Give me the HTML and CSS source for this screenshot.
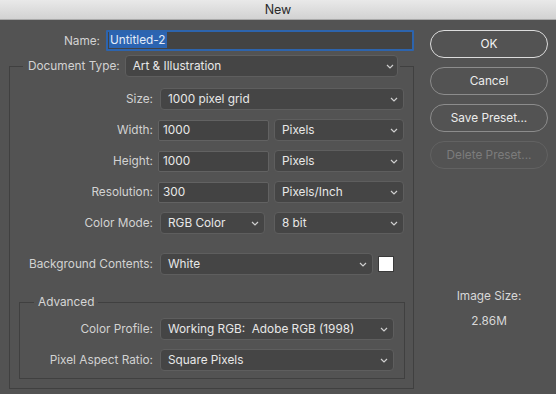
FILE: index.html
```html
<!DOCTYPE html>
<html lang="en">
  <head>
    <meta charset="UTF-8" />
    <meta name="viewport" content="width=device-width, initial-scale=1.0" />
    <title>New</title>
    <link rel="stylesheet" href="styles.css">
  </head>
  <body>
    <div class="titlebar">New</div>
    <div class="dialog">
      <div class="main">
        <div class="name-row">
          <label class="label name-label">Name:</label>
          <div class="field name-field"><span class="selected">Untitled-2</span></div>
        </div>

        <fieldset class="group doc-group">
          <legend class="doc-legend">
            <span class="label">Document Type:</span>
            <div class="select doc-select"><span>Art &amp; Illustration</span><svg class="chev" width="8" height="5" viewBox="0 0 8 5"><path d="M1 1L4 4L7 1" /></svg></div>
          </legend>

          <div class="row first">
            <span class="label">Size:</span>
            <div class="select inset size-select"><span>1000 pixel grid</span><svg class="chev" width="8" height="5" viewBox="0 0 8 5"><path d="M1 1L4 4L7 1" /></svg></div>
          </div>
          <div class="row">
            <span class="label">Width:</span>
            <div class="field num-field">1000</div>
            <div class="select unit-select"><span>Pixels</span><svg class="chev" width="8" height="5" viewBox="0 0 8 5"><path d="M1 1L4 4L7 1" /></svg></div>
          </div>
          <div class="row">
            <span class="label">Height:</span>
            <div class="field num-field">1000</div>
            <div class="select unit-select"><span>Pixels</span><svg class="chev" width="8" height="5" viewBox="0 0 8 5"><path d="M1 1L4 4L7 1" /></svg></div>
          </div>
          <div class="row">
            <span class="label">Resolution:</span>
            <div class="field num-field">300</div>
            <div class="select unit-select"><span>Pixels/Inch</span><svg class="chev" width="8" height="5" viewBox="0 0 8 5"><path d="M1 1L4 4L7 1" /></svg></div>
          </div>
          <div class="row">
            <span class="label">Color Mode:</span>
            <div class="select inset mode-select"><span>RGB Color</span><svg class="chev" width="8" height="5" viewBox="0 0 8 5"><path d="M1 1L4 4L7 1" /></svg></div>
            <div class="select unit-select"><span>8 bit</span><svg class="chev" width="8" height="5" viewBox="0 0 8 5"><path d="M1 1L4 4L7 1" /></svg></div>
          </div>
          <div class="row bg-row">
            <span class="label">Background Contents:</span>
            <div class="select inset bg-select"><span>White</span><svg class="chev" width="8" height="5" viewBox="0 0 8 5"><path d="M1 1L4 4L7 1" /></svg></div>
            <div class="swatch"></div>
          </div>

          <fieldset class="group adv-group">
            <legend class="adv-legend">Advanced</legend>
            <div class="row first">
              <span class="label adv-label">Color Profile:</span>
              <div class="select inset profile-select"><span>Working RGB:&nbsp; Adobe RGB (1998)</span><svg class="chev" width="8" height="5" viewBox="0 0 8 5"><path d="M1 1L4 4L7 1" /></svg></div>
            </div>
            <div class="row">
              <span class="label adv-label">Pixel Aspect Ratio:</span>
              <div class="select inset profile-select"><span>Square Pixels</span><svg class="chev" width="8" height="5" viewBox="0 0 8 5"><path d="M1 1L4 4L7 1" /></svg></div>
            </div>
          </fieldset>
        </fieldset>
      </div>

      <div class="side">
        <button class="btn primary">OK</button>
        <button class="btn">Cancel</button>
        <button class="btn">Save Preset...</button>
        <button class="btn" disabled>Delete Preset...</button>
        <div class="info">
          <div>Image Size:</div>
          <div class="info-value">2.86M</div>
        </div>
      </div>
    </div>
  </body>
</html>
```

FILE: styles.css
```css
* {
  box-sizing: border-box;
}
body {
  margin: 0;
  height: 394px;
  overflow: hidden;
  background: #535353;
  font-family: Inter, "Liberation Sans", Arial, sans-serif;
  font-size: 11.8px;
  color: #e6e6e6;
}
.titlebar {
  height: 20px;
  line-height: 20px;
  text-align: center;
  font-size: 12.5px;
  color: #2a2a2a;
  background: linear-gradient(#e9e9e9, #d2d2d2);
  border-bottom: 1px solid #a9a9a9;
}
.dialog {
  display: flex;
  padding-top: 10px;
}
.main {
  width: 414px;
}
.label {
  color: #d2d2d2;
  white-space: nowrap;
}

/* name */
.name-row {
  display: flex;
  align-items: center;
  gap: 6px;
  height: 21px;
}
.name-label {
  width: 100px;
  text-align: right;
}
.field {
  height: 21px;
  line-height: 19px;
  padding-left: 4px;
  background: #434343;
  border: 1px solid #626262;
  border-radius: 2px;
  color: #e8e8e8;
}
.name-field {
  width: 308px;
  border: 2px solid #2d64ad;
  border-radius: 1px;
  padding-left: 1px;
  line-height: 17px;
}
.selected {
  display: inline-block;
  background: #2c64b1;
  color: #e4ecf8;
  padding: 0 1px;
  line-height: 16px;
}

/* groups */
.group {
  margin: 0;
  padding: 0;
  border: 1px solid #404040;
  min-width: 0;
}
.doc-group {
  width: 405px;
  margin: 4px 0 0 9px;
  padding: 11px 0 9px 0;
}
.doc-legend {
  display: flex;
  align-items: center;
  gap: 5px;
  margin-left: 13px;
  padding: 0 2px 0 5px;
}
.adv-group {
  width: 386px;
  margin: 19px 0 0 9px;
  padding: 8px 0 7px 0;
}
.adv-legend {
  margin-left: 14px;
  padding: 0 4px;
  line-height: 16px;
  color: #d6d6d6;
}

/* rows */
.row {
  display: flex;
  align-items: center;
  gap: 5px;
  height: 22px;
  margin-top: 9px;
}
.row.first {
  margin-top: 0;
}
.row.bg-row {
  margin-top: 19px;
}
.row .label {
  width: 143px;
  text-align: right;
}
.row .adv-label {
  width: 133px;
}

/* selects */
.select {
  display: flex;
  align-items: center;
  justify-content: space-between;
  height: 22px;
  padding: 0 5px 0 7px;
  background: #454545;
  border: 1px solid #5e5e5e;
  border-radius: 4px;
  color: #e8e8e8;
  white-space: nowrap;
}
.chev path {
  fill: none;
  stroke: #cfcfcf;
  stroke-width: 1.2;
}
.inset {
  margin-left: 2px;
}
.doc-select {
  width: 273px;
  padding-right: 3px;
}
.size-select {
  width: 244px;
}
.num-field {
  width: 111px;
}
.unit-select {
  width: 130px;
}
.mode-select {
  width: 105px;
  margin-right: 4px;
}
.bg-select {
  width: 213px;
}
.swatch {
  width: 16px;
  height: 16px;
  background: #fff;
  border: 1px solid #3a3a3a;
}
.profile-select {
  width: 234px;
}

/* side */
.side {
  display: flex;
  flex-direction: column;
  align-items: center;
  gap: 9px;
  margin-left: 16px;
  width: 118px;
}
.btn {
  width: 118px;
  height: 28px;
  border: 1px solid #8c8c8c;
  border-radius: 14px;
  background: transparent;
  font-family: inherit;
  font-size: 11.8px;
  color: #ececec;
}
.btn.primary {
  border: 1.5px solid #dcdcdc;
  color: #f4f4f4;
}
.btn:disabled {
  border-color: #626262;
  color: #7c7c7c;
}
.info {
  margin-top: 110px;
  text-align: center;
  line-height: 16px;
  color: #d8d8d8;
}
.info-value {
  margin-top: 9px;
}
```
